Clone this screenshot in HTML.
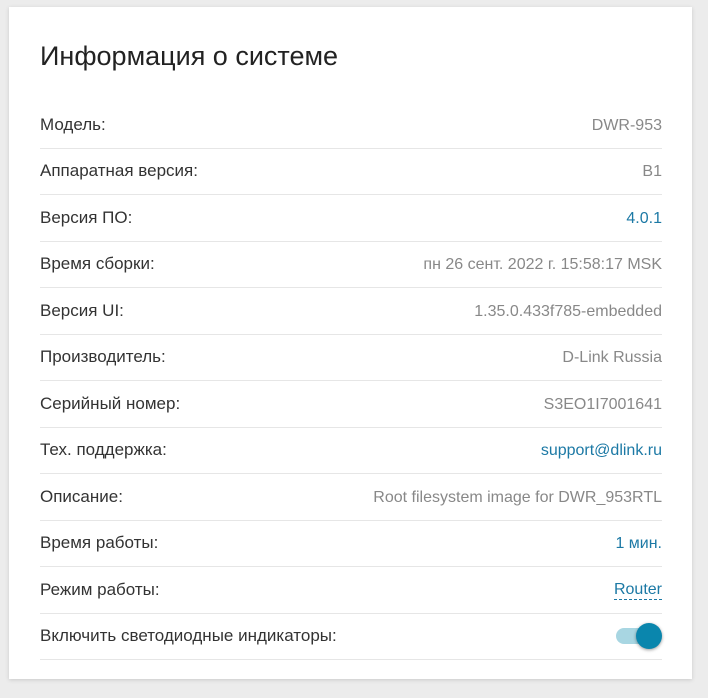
<!DOCTYPE html>
<html><head><meta charset="utf-8"><style>
body{margin:0;background:#ececec;width:708px;height:698px;overflow:hidden;font-family:"Liberation Sans",sans-serif;}
.card{position:absolute;left:9px;top:7px;width:683px;height:672px;background:#fff;box-shadow:0 1px 4px rgba(0,0,0,.15);}
h1{position:absolute;left:31px;top:34px;margin:0;font-weight:normal;font-size:27px;color:#222;}
.rows{position:absolute;left:31px;top:95px;width:622px;}
.row{height:45.5px;border-bottom:1px solid #e6e6e6;display:flex;justify-content:space-between;align-items:center;font-size:17px;color:#333;line-height:20px}
.v{color:#888;font-size:16px;padding-top:2px}
.l{color:#1c79a5}
.u{border-bottom:1.5px dashed #1c79a5;line-height:18px}
.tg{position:relative;width:46px;height:26px}
.tr{position:absolute;left:0;top:5px;width:40px;height:16px;border-radius:8px;background:#a8d6e2}
.kb{position:absolute;left:20px;top:0;width:26px;height:26px;border-radius:50%;background:#0a86ad;box-shadow:0 1px 3px rgba(0,0,0,.4)}
</style></head><body>
<div class="card">
<h1>Информация о системе</h1>
<div class="rows">
<div class="row"><span>Модель:</span><span class="v">DWR-953</span></div>
<div class="row"><span>Аппаратная версия:</span><span class="v">B1</span></div>
<div class="row"><span>Версия ПО:</span><span class="v l">4.0.1</span></div>
<div class="row"><span>Время сборки:</span><span class="v">пн 26 сент. 2022 г. 15:58:17 MSK</span></div>
<div class="row"><span>Версия UI:</span><span class="v">1.35.0.433f785-embedded</span></div>
<div class="row"><span>Производитель:</span><span class="v">D-Link Russia</span></div>
<div class="row"><span>Серийный номер:</span><span class="v">S3EO1I7001641</span></div>
<div class="row"><span>Тех. поддержка:</span><span class="v l">support@dlink.ru</span></div>
<div class="row"><span>Описание:</span><span class="v">Root filesystem image for DWR_953RTL</span></div>
<div class="row"><span>Время работы:</span><span class="v l">1 мин.</span></div>
<div class="row"><span>Режим работы:</span><span class="v l u">Router</span></div>
<div class="row"><span>Включить светодиодные индикаторы:</span><span class="tg"><span class="tr"></span><span class="kb"></span></span></div>
</div>
</div>
</body></html>
